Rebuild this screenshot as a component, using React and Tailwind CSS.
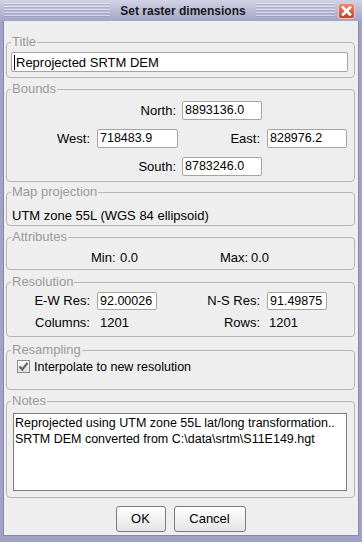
import React from 'react';

const stripes =
  'bg-[repeating-linear-gradient(to_bottom,rgba(255,255,255,0.45)_0px,rgba(255,255,255,0.45)_1px,rgba(120,120,160,0.25)_1px,rgba(120,120,160,0.25)_2px,transparent_2px,transparent_3px)]';

function Group({ title, className = '', children }) {
  return (
    <fieldset className={`border border-[#b6b6b6] rounded-[4px] ${className}`}>
      <legend className="ml-[4px] px-[1px] text-[13px] leading-[14px] text-[#9a9a9a]">{title}</legend>
      {children}
    </fieldset>
  );
}

function Field({ value, className = '', caret = false }) {
  return (
    <div
      className={`flex items-center bg-white border border-[#a4a4a4] rounded-[2px] pl-[2px] leading-none text-black whitespace-nowrap overflow-hidden ${className}`}
    >
      {caret && <span className="w-[1px] h-[15px] bg-black mr-[1px] -ml-[1px]" />}
      {value}
    </div>
  );
}

function Button({ children, className = '' }) {
  return (
    <div
      className={`h-[26px] flex items-center justify-center border border-[#7c7c7c] rounded-[3px] bg-[linear-gradient(to_bottom,#ffffff,#e4e4e4)] text-[13px] text-black ${className}`}
    >
      {children}
    </div>
  );
}

export default function App() {
  return (
    <div className="w-[362px] h-[542px] flex flex-col bg-[#a2a2c6] px-[3px] pb-[6px] font-['Liberation_Sans',Arial,sans-serif] select-none">
      {/* title bar */}
      <div className="h-[21px] -mx-[3px] flex items-center bg-[linear-gradient(to_bottom,#d2d2e6,#a4a4c8)]">
        <div className="flex-1 h-full pl-[4px] py-[3px]">
          <div className={`h-full ${stripes}`} />
        </div>
        <span className="px-[10px] text-[12px] font-bold text-[#1a1a1a] leading-none">Set raster dimensions</span>
        <div className="flex-1 h-full flex items-center">
          <div className="flex-1 h-full py-[3px]">
            <div className={`h-full ${stripes}`} />
          </div>
          <div className="ml-[3px] mr-[7px] w-[17px] h-[16px] rounded-[3px] border border-[#f3c4b8] bg-[linear-gradient(to_bottom,#ea8a70,#c5432c)] flex items-center justify-center">
            <svg width="11" height="10" viewBox="0 0 11 10">
              <path d="M2 1.5 L9 8.5 M9 1.5 L2 8.5" stroke="#ffffff" strokeWidth="2.6" strokeLinecap="square" />
            </svg>
          </div>
        </div>
      </div>

      {/* content */}
      <div className="flex-1 flex flex-col bg-[#eeeeee] border-x border-b border-[#8686ae] pl-[2px] pr-[3px] text-[13px] text-black">
        <Group title="Title" className="mt-[14px] h-[43px]">
          <Field value="Reprojected SRTM DEM" caret className="mt-[3px] ml-[4px] w-[337px] h-[20px] pl-[3px] text-[13px]" />
        </Group>

        <Group title="Bounds" className="mt-[4px] h-[100px]">
          <div className="mt-[5px] flex flex-col gap-[9px]">
            <div className="flex items-center h-[19px]">
              <span className="w-[169px] text-right">North:</span>
              <Field value="8893136.0" className="ml-[6px] w-[80px] h-[19px] text-[12.5px]" />
            </div>
            <div className="flex items-center h-[19px]">
              <span className="w-[83px] text-right">West:</span>
              <Field value="718483.9" className="ml-[7px] w-[81px] h-[19px] text-[12.5px]" />
              <span className="w-[82px] text-right">East:</span>
              <Field value="828976.2" className="ml-[7px] w-[80px] h-[19px] text-[12.5px]" />
            </div>
            <div className="flex items-center h-[19px]">
              <span className="w-[169px] text-right">South:</span>
              <Field value="8783246.0" className="ml-[6px] w-[80px] h-[19px] text-[12.5px]" />
            </div>
          </div>
        </Group>

        <Group title="Map projection" className="mt-[3px] h-[41px]">
          <div className="mt-[10px] pl-[5px] leading-[14px]">UTM zone 55L (WGS 84 ellipsoid)</div>
        </Group>

        <Group title="Attributes" className="mt-[4px] h-[40px]">
          <div className="mt-[7px] pl-[84px] flex leading-[14px]">
            <span className="w-[29px]">Min:</span>
            <span className="w-[100px]">0.0</span>
            <span className="w-[31px]">Max:</span>
            <span>0.0</span>
          </div>
        </Group>

        <Group title="Resolution" className="mt-[5px] h-[62px]">
          <div className="mt-[3px] flex items-center h-[18px]">
            <span className="w-[83px] text-right">E-W Res:</span>
            <Field value="92.00026" className="ml-[7px] w-[60px] h-[18px] text-[12.5px]" />
            <span className="w-[103px] text-right">N-S Res:</span>
            <Field value="91.49875" className="ml-[7px] w-[60px] h-[18px] text-[12.5px]" />
          </div>
          <div className="mt-[6px] flex items-center leading-[14px]">
            <span className="w-[83px] text-right">Columns:</span>
            <span className="ml-[7px] w-[60px] pl-[3px]">1201</span>
            <span className="w-[103px] text-right">Rows:</span>
            <span className="ml-[7px] pl-[2px]">1201</span>
          </div>
        </Group>

        <Group title="Resampling" className="mt-[6px] h-[47px]">
          <div className="mt-[3px] ml-[10px] flex items-center h-[13px]">
            <span className="w-[13px] h-[13px] border border-[#8a8a8a] bg-[linear-gradient(to_bottom,#fdfdfd,#dedede)] flex items-center justify-center">
              <svg width="11" height="11" viewBox="0 0 11 11">
                <path d="M1.5 5.5 L4.3 8.5 L9.5 1.8" fill="none" stroke="#5f6670" strokeWidth="2.2" />
              </svg>
            </span>
            <span className="ml-[4px] leading-[14px] text-[12.5px]">Interpolate to new resolution</span>
          </div>
        </Group>

        <Group title="Notes" className="mt-[4px] h-[104px]">
          <div className="mt-[5px] ml-[6px] w-[334px] h-[78px] bg-white border border-[#7e7e7e] pt-[1px] pl-[1px] text-[12.5px] leading-[16px] whitespace-nowrap overflow-hidden">
            <div>Reprojected using UTM zone 55L lat/long transformation..</div>
            <div>SRTM DEM converted from C:\data\srtm\S11E149.hgt</div>
          </div>
        </Group>

        <div className="mt-[8px] flex justify-center gap-[8px]">
          <Button className="w-[50px]">OK</Button>
          <Button className="w-[72px]">Cancel</Button>
        </div>
      </div>
    </div>
  );
}
